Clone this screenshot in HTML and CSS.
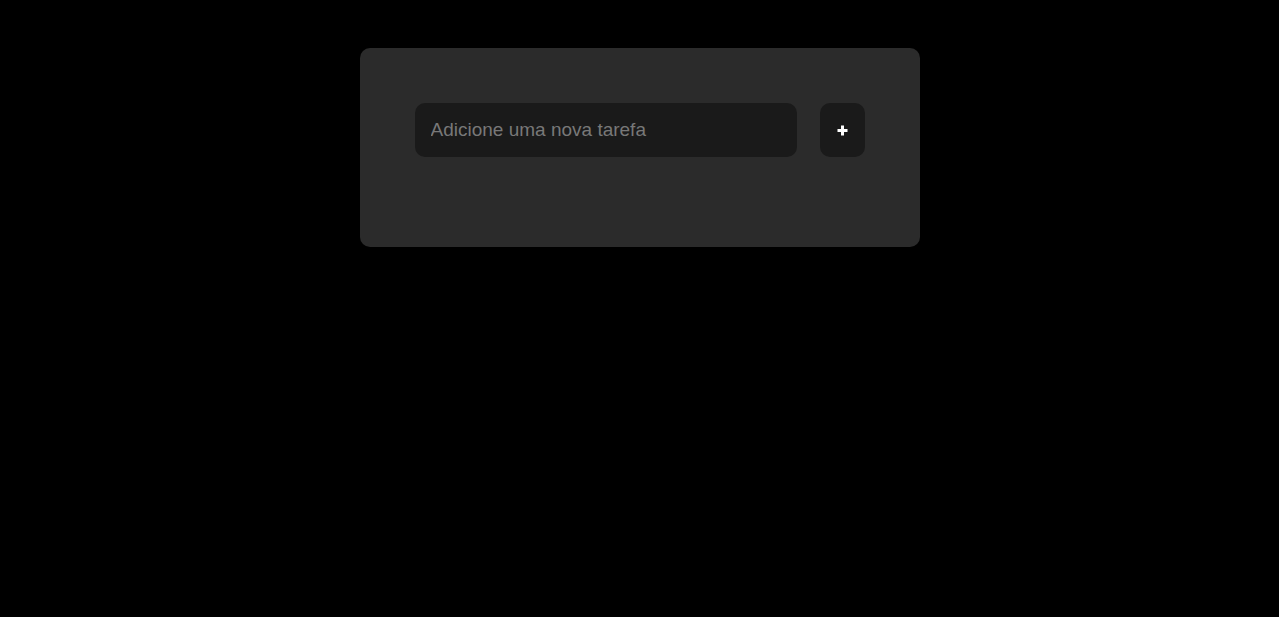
FILE: index.html
```html
<!DOCTYPE html>
<html lang="pt-BR">
<head>
<meta charset="utf-8">
<title>Tarefas</title>
<link rel="stylesheet" href="styles.css">
</head>
<body>
<main class="card">
  <form class="task-form">
    <input class="task-input" type="text" placeholder="Adicione uma nova tarefa">
    <button class="add-btn" type="button" aria-label="Adicionar">
      <svg class="plus-icon" width="11" height="11" viewBox="0 0 11 11"><path d="M5.5 0.5v10M0.5 5.5h10" stroke="#fff" stroke-width="3"/></svg>
    </button>
  </form>
  <ul class="task-list"></ul>
</main>
</body>
</html>
```
FILE: styles.css
```css
html, body {
  margin: 0;
  padding: 0;
  background: #000;
  font-family: "Liberation Sans", Arial, sans-serif;
}
body {
  display: flex;
  justify-content: center;
  align-items: flex-start;
  padding-top: 48px;
  min-height: 617px;
  box-sizing: border-box;
}
.card {
  width: 560px;
  box-sizing: border-box;
  background: #2b2b2b;
  border-radius: 10px;
  padding: 55px 55px 90px;
}
.task-form {
  display: flex;
  gap: 23px;
  margin: 0;
}
.task-input {
  flex: 1;
  height: 54px;
  box-sizing: border-box;
  border: none;
  outline: none;
  border-radius: 10px;
  background: #1a1a1a;
  color: #ddd;
  padding: 0 16px;
  font-family: "Liberation Sans", Arial, sans-serif;
  font-size: 19px;
}
.task-input::placeholder {
  color: #787878;
}
.add-btn {
  width: 45px;
  height: 54px;
  border: none;
  border-radius: 10px;
  background: #1a1a1a;
  padding: 0;
  display: flex;
  align-items: center;
  justify-content: center;
  cursor: pointer;
}
.plus-icon {
  display: block;
}
.task-list {
  list-style: none;
  margin: 0;
  padding: 0;
}
```
